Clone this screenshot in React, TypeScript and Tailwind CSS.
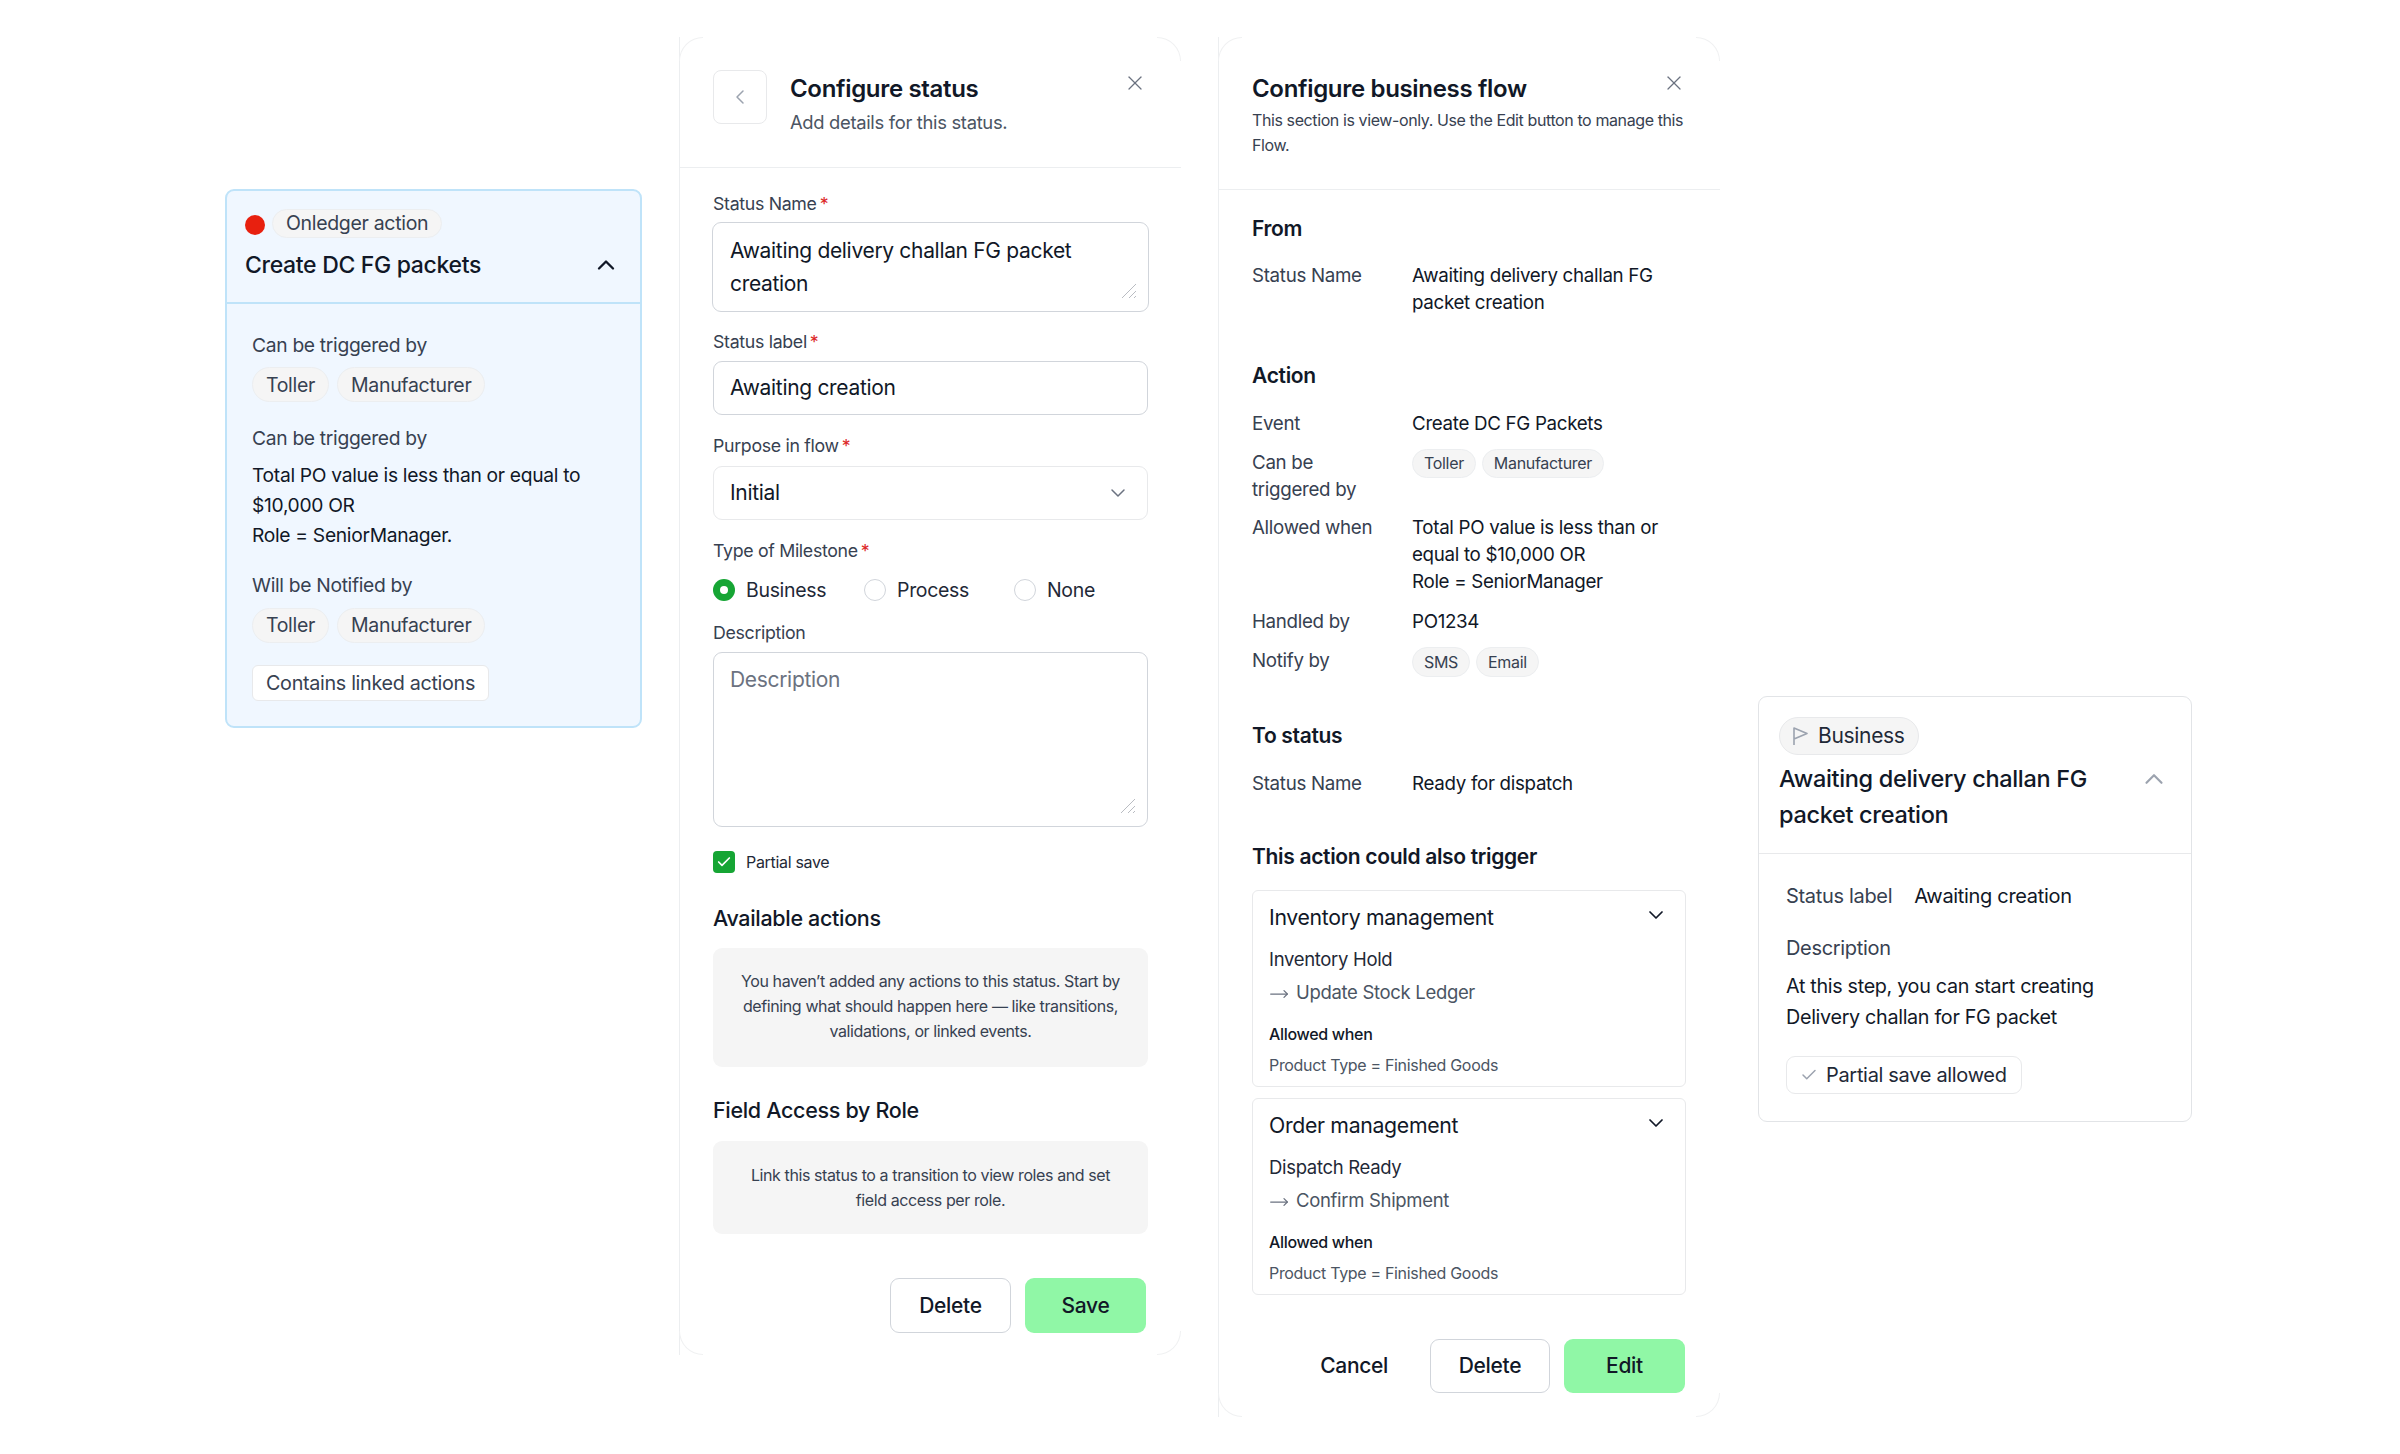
import { Check, ChevronDown, ChevronLeft, ChevronUp, MoveRight, X } from "lucide-react";

const Req = () => <span className="ml-[3px] text-[#dc2626]">*</span>;

function Label({ text, required, className = "" }: { text: string; required?: boolean; className?: string }) {
  return (
    <div className={`text-[17.75px] leading-[24px] text-[#374151] ${className}`}>
      {text}
      {required && <Req />}
    </div>
  );
}

function Grip() {
  return (
    <svg className="absolute bottom-[12px] right-[11px]" width="16" height="16" viewBox="0 0 16 16" fill="none" stroke="#b9bcc2" strokeWidth="1">
      <path d="M1 15 15 1M8 15l7-7M13 15l2-2" />
    </svg>
  );
}

// faint arcs at the panel corners
function Corners() {
  return (
    <>
      <span className="absolute left-0 top-0 h-[24px] w-[24px] rounded-tl-[24px] border-l border-t border-[#f0f1f2]" />
      <span className="absolute right-0 top-0 h-[24px] w-[24px] rounded-tr-[24px] border-r border-t border-[#f0f1f2]" />
      <span className="absolute bottom-0 left-0 h-[24px] w-[24px] rounded-bl-[24px] border-b border-l border-[#f0f1f2]" />
      <span className="absolute bottom-0 right-0 h-[24px] w-[24px] rounded-br-[24px] border-b border-r border-[#f0f1f2]" />
    </>
  );
}

function Chip({ text, className }: { text: string; className: string }) {
  return <span className={`inline-flex items-center rounded-full border border-[#eceef0] bg-[#f5f5f5] text-[#374151] ${className}`}>{text}</span>;
}

function Radio({ on, text, className = "" }: { on?: boolean; text: string; className?: string }) {
  return (
    <div className={`flex items-center gap-[11px] ${className}`}>
      {on ? (
        <span className="flex h-[22px] w-[22px] items-center justify-center rounded-full bg-[#16a534]">
          <span className="h-[8px] w-[8px] rounded-full bg-white" />
        </span>
      ) : (
        <span className="h-[22px] w-[22px] rounded-full border border-[#d1d5db] bg-white" />
      )}
      <span className="text-[19.5px] leading-[24px] text-[#1f2937]">{text}</span>
    </div>
  );
}

function Row({ label, children, className = "" }: { label: React.ReactNode; children: React.ReactNode; className?: string }) {
  return (
    <div className={`flex text-[18.75px] leading-[27px] ${className}`}>
      <div className="w-[160px] shrink-0 text-[#374151]">{label}</div>
      <div className="text-[#111827]">{children}</div>
    </div>
  );
}

function TriggerCard({ title, first, second, className = "" }: { title: string; first: string; second: string; className?: string }) {
  return (
    <div className={`relative h-[197px] w-[434px] rounded-[6px] border border-[#e8e9eb] px-[16px] pt-[12px] ${className}`}>
      <div className="text-[21.25px] leading-[28px] text-[#111827]">{title}</div>
      <ChevronDown className="absolute right-[17px] top-[12px] h-[24px] w-[24px] text-[#111827]" strokeWidth={1.75} />
      <div className="mt-[14.5px] text-[18.5px] leading-[27px] text-[#1f2937]">{first}</div>
      <div className="mt-[6px] flex items-center gap-[7px] text-[18.5px] leading-[27px] text-[#4b5563]">
        <MoveRight className="h-[20px] w-[20px] translate-y-[2px] text-[#6b7280]" strokeWidth={1.5} />
        {second}
      </div>
      <div className="mt-[16.5px] text-[16px] font-medium leading-[24px] text-[#111827]">Allowed when</div>
      <div className="mt-[7px] text-[16px] leading-[24px] text-[#4b5563]">Product Type = Finished Goods</div>
    </div>
  );
}

export default function App() {
  return (
    <div className="flex h-[1454px] w-[2400px] items-start bg-white pl-[225px] font-['Inter','Liberation_Sans',sans-serif] tracking-[-0.02em]">
      {/* action card */}
      <div className="mt-[189px] h-[539px] w-[417px] shrink-0 rounded-[9px] border-2 border-[#bfe3f9] bg-[#f0f7ff]">
        <div className="relative h-[113px] border-b-2 border-[#bfe3f9] pl-[18px] pt-[18px]">
          <div className="flex items-center gap-[7px]">
            <span className="h-[20px] w-[20px] translate-y-[1px] rounded-full bg-[#e8200f]" />
            <Chip text="Onledger action" className="h-[29px] px-[13px] text-[19.5px]" />
          </div>
          <div className="mt-[10.5px] text-[23px] font-medium leading-[32px] text-[#111827]">Create DC FG packets</div>
          <ChevronUp className="absolute right-[20px] top-[60px] h-[28px] w-[28px] text-[#111827]" strokeWidth={2} />
        </div>
        <div className="pl-[25px] pr-[20px] pt-[25.5px] text-[19.25px] leading-[30px]">
          <div className="text-[#374151]">Can be triggered by</div>
          <div className="mt-[7.5px] flex gap-[8px]">
            <Chip text="Toller" className="h-[35px] px-[13px] text-[19.5px]" />
            <Chip text="Manufacturer" className="h-[35px] px-[13px] text-[19.5px]" />
          </div>
          <div className="mt-[21px] text-[#374151]">Can be triggered by</div>
          <div className="mt-[6.5px] text-[#111827]">
            Total PO value is less than or equal to
            <br />
            $10,000 OR
            <br />
            Role = SeniorManager.
          </div>
          <div className="mt-[20px] text-[#374151]">Will be Notified by</div>
          <div className="mt-[8px] flex gap-[8px]">
            <Chip text="Toller" className="h-[35px] px-[13px] text-[19.5px]" />
            <Chip text="Manufacturer" className="h-[35px] px-[13px] text-[19.5px]" />
          </div>
          <div className="mt-[22px] inline-flex h-[36px] items-center rounded-[6px] border border-[#e8e9eb] bg-white px-[13px] text-[19.75px] text-[#374151]">
            Contains linked actions
          </div>
        </div>
      </div>

      {/* configure status */}
      <div className="relative ml-[37px] mt-[37px] h-[1318px] w-[502px] shrink-0 bg-white">
        <Corners />
        <div className="h-full border-l border-[#eceef0]">
          <div className="relative flex h-[131px] items-start border-b border-[#eceef0] pl-[33px] pt-[33px]">
            <div className="flex h-[54px] w-[54px] items-center justify-center rounded-[8px] border border-[#e8e9eb]">
              <ChevronLeft className="h-[24px] w-[24px] text-[#9ca3af]" strokeWidth={1.5} />
            </div>
            <div className="ml-[23px]">
              <div className="translate-y-[1px] text-[24px] font-semibold leading-[36px] text-[#111827]">Configure status</div>
              <div className="translate-y-[3px] text-[18.4px] leading-[27px] text-[#4b5563]">Add details for this status.</div>
            </div>
            <X className="absolute right-[34px] top-[34px] h-[24px] w-[24px] text-[#6b7280]" strokeWidth={1.25} />
          </div>
          <div className="px-[33px] pt-[24px]">
            <Label text="Status Name" required />
            <div className="relative mt-[6px] h-[90px] w-[437px] -translate-x-px rounded-[9px] border border-[#d1d5db] px-[17px] py-[11px] text-[21px] leading-[33px] text-[#111827]">
              Awaiting delivery challan FG packet
              <br />
              creation
              <Grip />
            </div>
            <Label text="Status label" required className="mt-[18px]" />
            <div className="mt-[7px] flex h-[54px] w-[435px] items-center rounded-[9px] border border-[#d1d5db] px-[16px] text-[21px] text-[#111827]">Awaiting creation</div>
            <Label text="Purpose in flow" required className="mt-[19px]" />
            <div className="mt-[8px] flex h-[54px] w-[435px] items-center justify-between rounded-[9px] border border-[#e8e9eb] pl-[16px] pr-[17px] text-[21px] text-[#111827]">
              Initial
              <ChevronDown className="h-[24px] w-[24px] text-[#6b7280]" strokeWidth={1.5} />
            </div>
            <Label text="Type of Milestone" required className="mt-[19px]" />
            <div className="mt-[14.5px] flex h-[24px]">
              <Radio on text="Business" className="w-[151px]" />
              <Radio text="Process" className="w-[150px]" />
              <Radio text="None" />
            </div>
            <Label text="Description" className="mt-[19.5px]" />
            <div className="relative mt-[7px] h-[175px] w-[435px] rounded-[9px] border border-[#d1d5db] px-[16px] py-[10px] text-[21px] leading-[33px] text-[#6b7280]">
              Description
              <Grip />
            </div>
            <div className="mt-[24px] flex items-center gap-[11px]">
              <span className="flex h-[22px] w-[22px] items-center justify-center rounded-[4px] bg-[#16a534]">
                <Check className="h-[16px] w-[16px] text-white" strokeWidth={2.5} />
              </span>
              <span className="text-[16px] leading-[22px] text-[#1f2937]">Partial save</span>
            </div>
            <div className="mt-[31px] text-[21.5px] font-medium leading-[28px] text-[#111827]">Available actions</div>
            <div className="mt-[16px] flex h-[119px] w-[435px] items-center justify-center rounded-[9px] bg-[#f5f5f5] pb-[2px] text-center text-[16px] leading-[24.7px] tracking-[-0.025em] text-[#374151]">
              <p>
                You haven’t added any actions to this status. Start by
                <br />
                defining what should happen here — like transitions,
                <br />
                validations, or linked events.
              </p>
            </div>
            <div className="mt-[29px] text-[21.5px] font-medium leading-[28px] text-[#111827]">Field Access by Role</div>
            <div className="mt-[17px] flex h-[93px] w-[435px] items-center justify-center rounded-[9px] bg-[#f5f5f5] text-center text-[16px] leading-[24.7px] tracking-[-0.025em] text-[#374151]">
              <p>
                Link this status to a transition to view roles and set
                <br />
                field access per role.
              </p>
            </div>
            <div className="mt-[44px] flex w-[433px] justify-end gap-[14px]">
              <button className="h-[55px] w-[121px] rounded-[9px] border border-[#d1d5db] bg-white text-[21px] font-medium text-[#111827]">Delete</button>
              <button className="h-[55px] w-[121px] rounded-[9px] bg-[#90f7a6] text-[21px] font-medium text-[#111827]">Save</button>
            </div>
          </div>
        </div>
      </div>

      {/* configure business flow */}
      <div className="relative ml-[37px] mt-[37px] h-[1380px] w-[502px] shrink-0 bg-white">
        <Corners />
        <div className="h-full border-l border-[#eceef0]">
          <div className="relative h-[153px] border-b border-[#eceef0] pl-[33px] pr-[30px] pt-[36px]">
            <div className="text-[24px] font-semibold leading-[32px] text-[#111827]">Configure business flow</div>
            <p className="mt-[3px] text-[16px] leading-[25px] tracking-[-0.025em] text-[#374151]">
              This section is view-only. Use the Edit button to manage this
              <br />
              Flow.
            </p>
            <X className="absolute right-[34px] top-[34px] h-[24px] w-[24px] text-[#6b7280]" strokeWidth={1.25} />
          </div>
          <div className="pl-[33px] pr-[33px] pt-[25px]">
            <div className="text-[21px] font-semibold leading-[28px] text-[#111827]">From</div>
            <Row label="Status Name" className="mt-[19px]">
              Awaiting delivery challan FG
              <br />
              packet creation
            </Row>
            <div className="mt-[46px] text-[21px] font-semibold leading-[28px] text-[#111827]">Action</div>
            <Row label="Event" className="mt-[19.5px]">Create DC FG Packets</Row>
            <Row
              label={
                <>
                  Can be
                  <br />
                  triggered by
                </>
              }
              className="mt-[12.5px]"
            >
              <div className="flex gap-[6px]">
                <Chip text="Toller" className="h-[29px] px-[11px] text-[16px]" />
                <Chip text="Manufacturer" className="h-[29px] px-[11px] text-[16px]" />
              </div>
            </Row>
            <Row label="Allowed when" className="mt-[11px]">
              Total PO value is less than or
              <br />
              equal to $10,000 OR
              <br />
              Role = SeniorManager
            </Row>
            <Row label="Handled by" className="mt-[13px]">PO1234</Row>
            <Row label="Notify by" className="mt-[12px]">
              <div className="flex gap-[6px]">
                <Chip text="SMS" className="h-[30px] px-[11px] text-[16px]" />
                <Chip text="Email" className="h-[30px] px-[11px] text-[16px]" />
              </div>
            </Row>
            <div className="mt-[45px] text-[21px] font-semibold leading-[28px] text-[#111827]">To status</div>
            <Row label="Status Name" className="mt-[20px]">Ready for dispatch</Row>
            <div className="mt-[46px] text-[21px] font-semibold leading-[28px] text-[#111827]">This action could also trigger</div>
            <TriggerCard title="Inventory management" first="Inventory Hold" second="Update Stock Ledger" className="mt-[19px]" />
            <TriggerCard title="Order management" first="Dispatch Ready" second="Confirm Shipment" className="mt-[11px]" />
            <div className="mt-[44px] flex items-center justify-end gap-[14px] pr-[2px]">
              <span className="mr-[28px] text-[21px] font-medium text-[#111827]">Cancel</span>
              <button className="h-[54px] w-[120px] rounded-[9px] border border-[#d1d5db] bg-white text-[21px] font-medium text-[#111827]">Delete</button>
              <button className="h-[54px] w-[121px] rounded-[9px] bg-[#90f7a6] text-[21px] font-medium text-[#111827]">Edit</button>
            </div>
          </div>
        </div>
      </div>

      {/* status card */}
      <div className="ml-[38px] mt-[696px] h-[426px] w-[434px] shrink-0 rounded-[9px] border border-[#e2e4e7] bg-white">
        <div className="relative h-[157px] border-b border-[#e8e9eb] pl-[20px] pt-[20px]">
          <div className="inline-flex h-[38px] items-center gap-[10px] rounded-full border border-[#e8e9eb] bg-[#f5f5f5] pl-[12px] pr-[13px] text-[21px] text-[#1f2937]">
            <svg width="16" height="20" viewBox="0 0 16 20" fill="none" stroke="#9ca3af" strokeWidth="1.6" strokeLinejoin="round">
              <path d="M2 19V2l13 5.5L2 13" />
            </svg>
            Business
          </div>
          <div className="mt-[6px] text-[23.5px] font-medium leading-[36px] text-[#111827]">
            Awaiting delivery challan FG
            <br />
            packet creation
          </div>
          <ChevronUp className="absolute right-[22px] top-[67px] h-[30px] w-[30px] text-[#9ca3af]" strokeWidth={1.75} />
        </div>
        <div className="pl-[27px] pt-[27px] text-[20px] leading-[31px]">
          <div className="flex gap-[22px]">
            <span className="text-[#374151]">Status label</span>
            <span className="text-[#111827]">Awaiting creation</span>
          </div>
          <div className="mt-[21px] text-[#374151]">Description</div>
          <div className="mt-[7px] text-[19.75px] text-[#111827]">
            At this step, you can start creating
            <br />
            Delivery challan for FG packet
          </div>
          <div className="mt-[23px] inline-flex h-[38px] items-center gap-[8px] rounded-[9px] border border-[#e8e9eb] pl-[13px] pr-[14px] text-[#1f2937]">
            <Check className="h-[18px] w-[18px] text-[#9ca3af]" strokeWidth={2} />
            Partial save allowed
          </div>
        </div>
      </div>
    </div>
  );
}
